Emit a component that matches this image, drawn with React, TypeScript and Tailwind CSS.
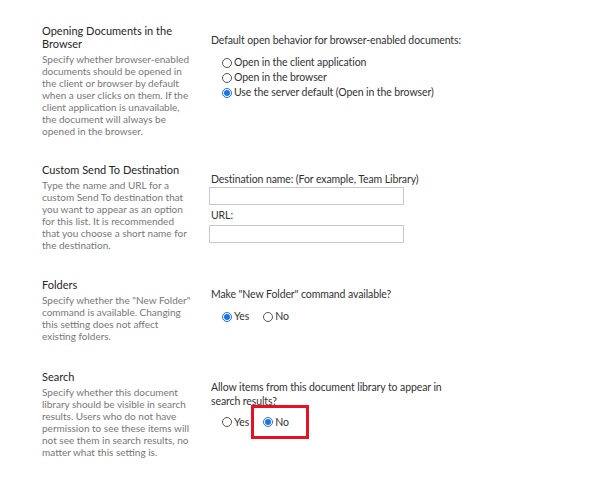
import type { ReactNode } from 'react';

const FONT = { fontFamily: 'Lato, "Noto Sans", sans-serif' };

function Radio({ checked, label }: { checked?: boolean; label: string }) {
  return (
    <span className="inline-flex items-center gap-[2px]">
      {checked ? (
        <span className="flex h-[10px] w-[10px] items-center justify-center rounded-full border border-[#1a73e8] bg-white">
          <span className="h-[6px] w-[6px] rounded-full bg-[#1a73e8]" />
        </span>
      ) : (
        <span className="h-[10px] w-[10px] rounded-full border border-[#555] bg-white" />
      )}
      <span>{label}</span>
    </span>
  );
}

function Section({
  title,
  desc,
  children,
  className,
}: {
  title: string;
  desc: string;
  children: ReactNode;
  className?: string;
}) {
  return (
    <div className={`flex ${className ?? ''}`}>
      <div className="w-[150px] shrink-0">
        <h3 className="mb-[3px] text-[11px] leading-[13px] text-[#262626]">{title}</h3>
        <p className="text-[10px] leading-[12px] text-[#777]">{desc}</p>
      </div>
      <div className="ml-[19px] pt-[9px] text-[10.5px] tracking-[-0.1px] text-[#333]">{children}</div>
    </div>
  );
}

export default function App() {
  return (
    <div className="h-[481px] w-[604px] bg-white pl-[42px] pt-[24px]" style={FONT}>
      <Section
        title="Opening Documents in the Browser"
        desc="Specify whether browser-enabled documents should be opened in the client or browser by default when a user clicks on them. If the client application is unavailable, the document will always be opened in the browser."
        className="mb-[26px]"
      >
        <div className="leading-[14px]">Default open behavior for browser-enabled documents:</div>
        <div className="ml-[11px] mt-[8px] flex flex-col leading-[15px]">
          <Radio label="Open in the client application" />
          <Radio label="Open in the browser" />
          <Radio checked label="Use the server default (Open in the browser)" />
        </div>
      </Section>

      <Section
        title="Custom Send To Destination"
        desc="Type the name and URL for a custom Send To destination that you want to appear as an option for this list. It is recommended that you choose a short name for the destination."
        className="mb-[27px]"
      >
        <div className="leading-[14px]">Destination name: (For example, Team Library)</div>
        <div className="ml-[-2px] mt-[1px] h-[18px] w-[195px] border border-[#c8c8c8] bg-white" />
        <div className="mt-[3px] leading-[14px]">URL:</div>
        <div className="ml-[-2px] mt-[3px] h-[18px] w-[195px] border border-[#c8c8c8] bg-white" />
      </Section>

      <Section
        title="Folders"
        desc={'Specify whether the "New Folder" command is available. Changing this setting does not affect existing folders.'}
        className="mb-[28px]"
      >
        <div className="leading-[14px]">Make "New Folder" command available?</div>
        <div className="ml-[11px] mt-[8px] flex gap-[14px] leading-[15px]">
          <Radio checked label="Yes" />
          <Radio label="No" />
        </div>
      </Section>

      <Section
        title="Search"
        desc="Specify whether this document library should be visible in search results. Users who do not have permission to see these items will not see them in search results, no matter what this setting is."
      >
        <div className="w-[245px] pt-[1px] leading-[14px]">
          Allow items from this document library to appear in search results?
        </div>
        <div className="ml-[11px] mt-[-3px] flex items-center leading-[15px]">
          <Radio label="Yes" />
          <span className="ml-[2px] flex h-[34px] w-[58px] items-center border-[3px] border-[#e81123] pl-[9px]">
            <Radio checked label="No" />
          </span>
        </div>
      </Section>
    </div>
  );
}
